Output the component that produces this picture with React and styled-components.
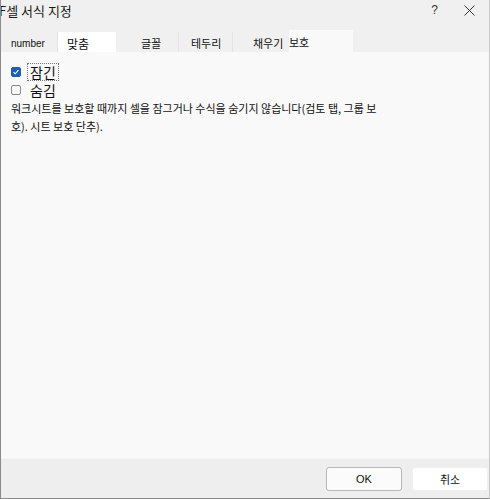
import React from 'react';
import styled, { createGlobalStyle } from 'styled-components';

const Global = createGlobalStyle`
  html, body { margin: 0; padding: 0; background: #ffffff; }
  body { font-family: "Noto Sans CJK KR", "Liberation Sans", sans-serif; }
`;

const Window = styled.div`
  width: 490px;
  height: 499px;
  box-sizing: border-box;
  border: 1px solid #8a8a8a;
  border-top: none;
  border-right-color: #c8c8c8;
  display: flex;
  flex-direction: column;
  background: #f0f0f0;
  overflow: hidden;
`;

const TitleBar = styled.div`
  height: 25px;
  display: flex;
  align-items: center;
  justify-content: space-between;
  background: #f0f0f0;
`;

const Title = styled.div`
  font-size: 13px;
  color: #1a1a1a;
  margin-left: -2px;
  margin-top: -5px;
`;

const TitleButtons = styled.div`
  display: flex;
  align-items: center;
  gap: 26px;
  margin-right: 14px;
  margin-top: -5px;
  color: #333;
`;

const Help = styled.span`
  font-family: "Liberation Sans", sans-serif;
  font-size: 12px;
`;

const TabRow = styled.div`
  display: flex;
  align-items: flex-end;
  height: 27px;
`;

const Tab = styled.div`
  height: ${p => (p.active ? 22 : 20)}px;
  width: ${p => p.w}px;
  box-sizing: border-box;
  display: flex;
  align-items: center;
  padding-left: ${p => p.pl}px;
  padding-top: 2px;
  font-size: ${p => p.fs || 11}px;
  font-family: ${p => (p.latin ? '"Liberation Sans", sans-serif' : '"Noto Sans CJK KR", sans-serif')};
  color: #111;
  background: ${p => (p.active ? '#f9f9f9' : p.bg || '#f0f0f0')};
  border-right: ${p => (p.sep ? '1px solid #e4e4e4' : 'none')};
`;

const Panel = styled.div`
  flex: 1;
  background: #f9f9f9;
  padding: 11px 0 0 10px;
  display: flex;
  flex-direction: column;
`;

const CheckRow = styled.label`
  display: flex;
  align-items: center;
  gap: 6px;
  height: 18px;
`;

const Box = styled.span`
  width: 10px;
  height: 10px;
  box-sizing: border-box;
  border-radius: 2px;
  border: 1px solid ${p => (p.checked ? '#1c5fb3' : '#8a8a8a')};
  background: ${p => (p.checked ? '#1c5fb3' : '#fbfbfb')};
  display: flex;
  align-items: center;
  justify-content: center;
`;

const CheckText = styled.span`
  font-size: 14px;
  color: #111;
  line-height: 16px;
  padding: 0 2px;
  border: 1px ${p => (p.focus ? 'dotted #777' : 'solid transparent')};
`;

const Note = styled.p`
  margin: 0;
  font-size: 11px;
  line-height: 18px;
  color: #111;
`;

const Footer = styled.div`
  height: 39px;
  background: #eeeeee;
  border-top: 1px solid #f4f4f4;
  display: flex;
  justify-content: flex-end;
  align-items: center;
  gap: 10px;
  padding-right: 1px;
`;

const Button = styled.button`
  width: 76px;
  height: 24px;
  box-sizing: border-box;
  background: ${p => (p.primary ? '#fbfbfb' : '#ffffff')};
  border: 1px solid ${p => (p.primary ? '#b8b8b8' : '#f0f0f0')};
  border-radius: 3px;
  font-family: "Liberation Sans", "Noto Sans CJK KR", sans-serif;
  font-size: 11px;
  color: #111;
`;

const tabs = [
  { label: 'number', w: 57, pl: 10, latin: true, sep: true, fs: 10 },
  { label: '맞춤', w: 58, pl: 9, bg: '#ffffff', fs: 12 },
  { label: '글꼴', w: 63, pl: 25, sep: true },
  { label: '테두리', w: 54, pl: 12, sep: true },
  { label: '채우기', w: 56, pl: 20 },
  { label: '보호', w: 64, pl: 0, active: true },
];

const Check = () => (
  <svg width="8" height="8" viewBox="0 0 8 8">
    <path d="M1.5 4.2 L3.2 5.8 L6.5 2.2" fill="none" stroke="#fff" strokeWidth="1.1" />
  </svg>
);

export default function App() {
  return (
    <>
      <Global />
      <Window>
        <TitleBar>
          <Title>F셀 서식 지정</Title>
          <TitleButtons>
            <Help>?</Help>
            <svg width="11" height="11" viewBox="0 0 11 11">
              <path d="M0.5 0.5 L10.5 10.5 M10.5 0.5 L0.5 10.5" stroke="#333" strokeWidth="1" />
            </svg>
          </TitleButtons>
        </TitleBar>
        <TabRow>
          {tabs.map(t => (
            <Tab key={t.label} w={t.w} pl={t.pl} latin={t.latin} sep={t.sep} fs={t.fs} bg={t.bg} active={t.active}>
              {t.label}
            </Tab>
          ))}
        </TabRow>
        <Panel>
          <CheckRow>
            <Box checked><Check /></Box>
            <CheckText focus>잠긴</CheckText>
          </CheckRow>
          <CheckRow>
            <Box />
            <CheckText>숨김</CheckText>
          </CheckRow>
          <Note>
            워크시트를 보호할 때까지 셀을 잠그거나 수식을 숨기지 않습니다(검토 탭, 그룹 보
            <br />
            호). 시트 보호 단추).
          </Note>
        </Panel>
        <Footer>
          <Button primary>OK</Button>
          <Button>취소</Button>
        </Footer>
      </Window>
    </>
  );
}
